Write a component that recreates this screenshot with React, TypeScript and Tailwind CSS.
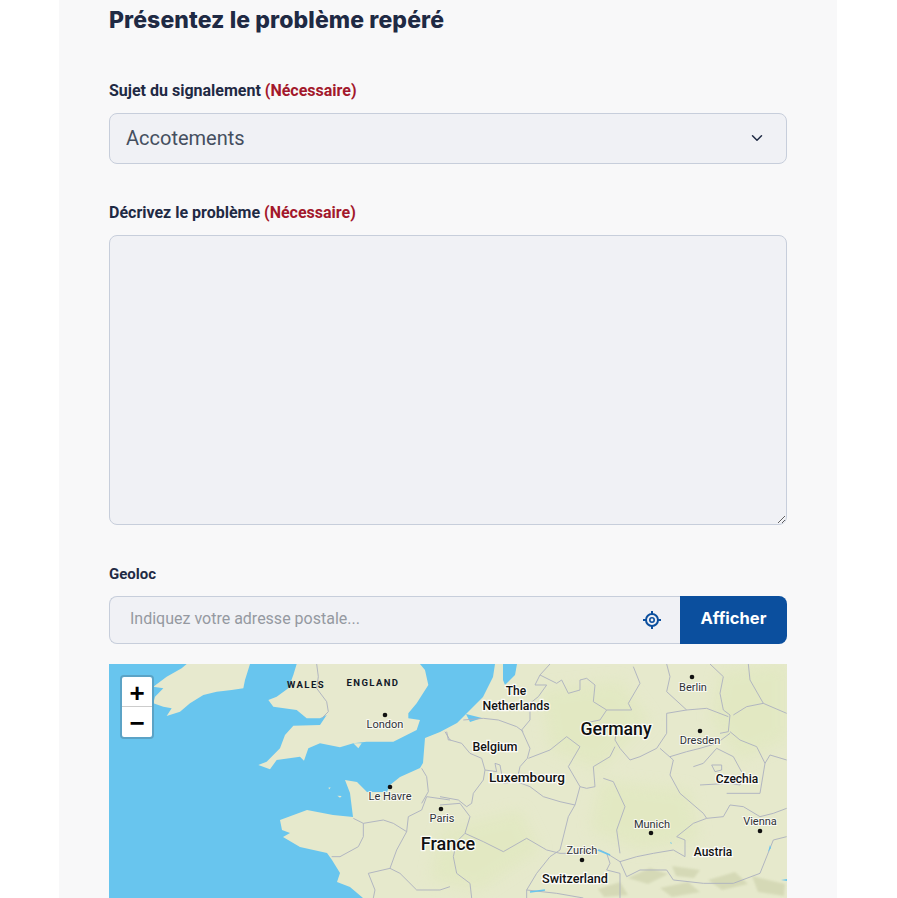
import { ChevronDown } from 'lucide-react';

const CITIES: { x: number; y: number; name: string; lx: number; ly: number }[] = [
  { x: 385, y: 715, name: 'London', lx: 385, ly: 728 },
  { x: 390, y: 787, name: 'Le Havre', lx: 390, ly: 800 },
  { x: 441, y: 809, name: 'Paris', lx: 442, ly: 822 },
  { x: 692, y: 677, name: 'Berlin', lx: 693, ly: 691 },
  { x: 700, y: 731, name: 'Dresden', lx: 700, ly: 744 },
  { x: 651, y: 833, name: 'Munich', lx: 652, ly: 828 },
  { x: 760, y: 831, name: 'Vienna', lx: 760, ly: 825 },
  { x: 582, y: 860, name: 'Zurich', lx: 582, ly: 854 },
];

const COUNTRIES: { name: string; x: number; y: number; size: number }[] = [
  { name: 'The', x: 516, y: 695, size: 12 },
  { name: 'Netherlands', x: 516, y: 710, size: 12.3 },
  { name: 'Belgium', x: 495, y: 751, size: 12.3 },
  { name: 'Luxembourg', x: 527, y: 782, size: 13.6 },
  { name: 'Germany', x: 616, y: 735, size: 17.7 },
  { name: 'Czechia', x: 737, y: 783, size: 12 },
  { name: 'France', x: 448, y: 850, size: 18 },
  { name: 'Austria', x: 713, y: 856, size: 12 },
  { name: 'Switzerland', x: 575, y: 883, size: 12.6 },
];

// traced on the west half of the map
const WEST_BORDERS = [
  '650,12 655,50 650,85 680,125 685,155 665,175',
  '760,475 790,490 850,480 880,490 920,515 925,470 965,450 980,410 1050,420',
  '965,430 985,395 980,350 965,325',
  '790,490 790,530 775,560 720,590 695,590',
  '920,515 890,570 870,625 805,640 825,690 820,714',
  '870,625 900,640 950,690 1020,690 1050,680',
  '1040,215 1045,240 1052,240',
];

// traced on the east half of the map
const EAST_BORDERS = [
  '300,45 285,75 320,75 295,110 270,130 270,180 245,210 270,265 262,295 240,320 230,365 270,380 310,410 360,425 405,435 385,470 360,570 330,590 290,640 260,690 260,714',
  '70,180 130,175 175,180 230,200 250,215',
  '15,215 30,240 65,250 90,280 125,295 135,330 170,335 165,310 180,315 190,370 230,365',
  '135,330 130,360 100,400 95,430 80,440 55,420 0,410',
  '0,435 60,430 90,470 75,520 50,545 40,590 50,640 90,670 95,714',
  '75,520 130,545 190,575 260,535 320,570 360,580',
  '405,435 420,380 385,320 420,260 380,230 330,270 265,295',
  '300,45 330,12',
  '300,45 350,70 365,60 385,100 420,90 420,60 440,55 465,75 460,125 500,150 480,180 430,190',
  '580,20 600,70 565,130 575,150 500,150',
  '680,12 690,50 680,95 740,150 680,160 680,220 650,265 600,290 570,300 540,265 525,240 530,210',
  '525,260 510,290 460,320 465,380 440,385 420,380',
  '490,355 520,365 555,440 530,510 540,580',
  '810,12 850,50 840,100 850,150 870,165 865,215 840,220',
  '865,170 800,145 740,150',
  '870,215 900,240 950,260 975,310 990,285 1040,300',
  '660,265 700,300 690,345 720,400 790,460 800,475 850,470 870,435 910,440 960,470 1000,460 1040,445',
  '690,290 740,275 780,265 830,250 870,220',
  '760,320 790,310 830,265 880,290 910,345 900,375 870,370 780,375',
  '800,475 760,490 710,530 735,540 735,590 700,570 640,580 590,590 540,605 500,580 480,570 395,580 360,580',
  '540,605 560,650 600,630 680,630 700,660 790,670 880,670 960,640 1000,540 1040,530',
  '500,580 510,610 500,630 540,640 540,714',
  '260,690 350,700 430,714',
  '925,12 930,60 970,130 920,140 880,165',
  '970,130 1040,160',
  '860,400 960,400 975,310',
  '815,315 845,315 845,330 825,335 815,315',
];

function MapDrawing() {
  return (
    <svg viewBox="109 664 678 234" className="block w-full h-full" role="img">
      <defs>
        <filter id="soft">
          <feGaussianBlur stdDeviation="7" />
        </filter>
        <filter id="relief">
          <feGaussianBlur stdDeviation="1.2" />
        </filter>
      </defs>
      <rect x="109" y="664" width="678" height="234" fill="#68c5ee" />
      <g transform="translate(100 660) scale(0.33333)" fill="#e7e9ce">
        {/* Ireland */}
        <polygon points="450,12 435,60 430,85 395,90 350,95 310,105 270,130 240,155 200,168 215,145 190,140 160,130 165,110 190,85 160,80 200,50 245,25 260,12" />
        {/* Great Britain */}
        <polygon points="590,12 580,45 565,85 530,110 505,120 520,140 590,150 620,175 660,175 680,165 660,195 580,197 555,225 540,265 500,305 475,315 510,328 530,300 600,290 612,302 625,265 660,250 720,262 760,250 800,245 880,245 950,210 960,180 925,175 925,160 950,130 985,75 975,30 960,12" />
        <polygon points="760,250 785,250 775,265" />
        <polygon points="685,383 692,382 688,388" />
        <polygon points="712,407 725,408 720,413" />
      </g>
      {/* Continent */}
      <path
        d="M495 664L493 677L483 697L467 713L457 723L440 732L425 738L423 763L420 768L400 777L390 785L387 792L367 792L357 782L345 780L350 793L353 817L333 815L307 810L280 820L282 830L290 833L283 837L300 847L327 853L332 860L340 873L337 882L350 887L363 898L787 898L787 664Z"
        fill="#e6e9cc"
      />
      {/* IJsselmeer and delta */}
      <path d="M503 664L517 664L515 675L505 685L503 680Z" fill="#68c5ee" />
      <path d="M466 714L482 718L470 722Z" fill="#68c5ee" />
      {/* Green and relief patches */}
      <g fill="#e0e8bd" opacity="0.6" filter="url(#soft)">
        <path d="M540 690L620 680L650 720L600 770L550 750Z" />
        <path d="M600 780L690 790L700 840L640 850L590 830Z" />
        <path d="M440 830L520 810L540 850L480 890L430 880Z" />
        <path d="M720 670L787 664L787 740L740 760L710 720Z" />
      </g>
      <g fill="#cfd3ae" opacity="0.7" filter="url(#relief)">
        <path d="M628 878L650 868L668 874L648 884Z" />
        <path d="M672 866L700 870L694 878L676 876Z" />
        <path d="M660 888L688 882L700 892L672 897Z" />
        <path d="M708 880L735 872L748 884L722 890Z" />
        <path d="M598 889L620 882L628 895L604 897Z" />
        <path d="M752 876L785 884L784 896L758 892Z" />
      </g>
      <g transform="translate(440 660) scale(0.33333)" fill="none" stroke="#adb2bf" strokeWidth="2.8" strokeLinejoin="round">
        {EAST_BORDERS.map((p) => (
          <polyline key={p} points={p} />
        ))}
      </g>
      <g transform="translate(100 660) scale(0.33333)" fill="none" stroke="#adb2bf" strokeWidth="2.8" strokeLinejoin="round">
        {WEST_BORDERS.map((p) => (
          <polyline key={p} points={p} />
        ))}
      </g>
      {/* Lakes */}
      <path d="M598 850L610 855" stroke="#68c5ee" strokeWidth="1.5" fill="none" />
      <path d="M530 892L545 890" stroke="#68c5ee" strokeWidth="1.5" fill="none" />
      <path d="M670 842L672 843L671 844Z M770 845L768 852L771 848Z M781 880L787 879L787 881Z" fill="#68c5ee" />
      <g fontFamily="'Roboto', sans-serif">
        <g fill="#111827" fontSize="9.5" fontWeight="700" letterSpacing="1.4" textAnchor="middle">
          <text x="306" y="688">WALES</text>
          <text x="373" y="686">ENGLAND</text>
        </g>
        {CITIES.map((c) => (
          <g key={c.name}>
            <circle cx={c.x} cy={c.y} r="2.3" fill="#111" />
            <text
              x={c.lx}
              y={c.ly}
              fontSize="11"
              fill="#2f3237"
              textAnchor="middle"
              stroke="#fff"
              strokeWidth="2"
              strokeOpacity="0.75"
              paintOrder="stroke"
            >
              {c.name}
            </text>
          </g>
        ))}
        {COUNTRIES.map((c) => (
          <text
            key={c.name}
            x={c.x}
            y={c.y}
            fontSize={c.size}
            fontWeight="500"
            fill="#111"
            textAnchor="middle"
            stroke="#fff"
            strokeWidth="2.5"
            strokeOpacity="0.85"
            paintOrder="stroke"
          >
            {c.name}
          </text>
        ))}
      </g>
    </svg>
  );
}

function LocateIcon() {
  return (
    <svg width="20" height="20" viewBox="0 0 20 20" fill="none" stroke="#0b4f9e">
      <circle cx="10" cy="10" r="6" strokeWidth="2" />
      <circle cx="10" cy="10" r="2.2" strokeWidth="1.6" />
      <path d="M10 1v4M10 15v4M1 10h4M15 10h4" strokeWidth="2" />
    </svg>
  );
}

function Required() {
  return <span className="text-[#a3182c]">(Nécessaire)</span>;
}

export default function App() {
  return (
    <div className="h-[898px] overflow-hidden bg-white font-['Roboto',sans-serif]">
      <main className="ml-[59px] w-[778px] h-full bg-[#f8f8f9] px-[50px] pt-[5px]">
        <h2 className="font-['Inter',sans-serif] text-[23px] leading-[30px] font-extrabold tracking-[0.1px] text-[#1f2a44]">
          Présentez le problème repéré
        </h2>

        <label className="block mt-[46px] mb-[12px] text-[16px] leading-[20px] font-bold text-[#1f2a44]">
          Sujet du signalement <Required />
        </label>
        <div className="flex items-center justify-between h-[51px] pb-[2px] pl-[16px] pr-[20px] rounded-[8px] border border-[#c7cedb] bg-[#f0f1f5] text-[20px] text-[#454f5f]">
          <span>Accotements</span>
          <ChevronDown size={18} strokeWidth={2} className="text-[#1f2a44]" />
        </div>

        <label className="block mt-[39px] mb-[12px] text-[16px] leading-[20px] font-bold text-[#1f2a44]">
          Décrivez le problème <Required />
        </label>
        <textarea className="block w-full h-[290px] rounded-[8px] border border-[#c7cedb] bg-[#f0f1f5]" />

        <label className="block mt-[39px] mb-[12px] text-[15px] leading-[20px] font-bold text-[#1f2a44]">
          Geoloc
        </label>
        <div className="flex h-[48px]">
          <div className="flex flex-1 items-center justify-between pl-[20px] pr-[18px] rounded-l-[8px] border border-r-0 border-[#c7cedb] bg-[#f0f1f5]">
            <span className="pb-[3px] text-[16px] text-[#9599a1]">Indiquez votre adresse postale...</span>
            <LocateIcon />
          </div>
          <button className="w-[107px] pb-[4px] rounded-r-[8px] bg-[#0b4f9e] font-['Inter',sans-serif] text-[16.5px] font-bold text-white">
            Afficher
          </button>
        </div>

        <div className="relative mt-[20px] h-[234px] overflow-hidden">
          <MapDrawing />
          <div className="absolute left-[11px] top-[11px] rounded-[4px] border-2 border-[#5ba3c6] bg-white font-['Liberation_Sans',sans-serif] text-black">
            <div className="flex h-[30px] w-[30px] items-center justify-center pt-[2px] border-b border-[#cccccc] text-[26px] font-bold leading-none">
              +
            </div>
            <div className="flex h-[30px] w-[30px] items-center justify-center pt-[2px] text-[26px] font-bold leading-none">
              −
            </div>
          </div>
        </div>
      </main>
    </div>
  );
}
